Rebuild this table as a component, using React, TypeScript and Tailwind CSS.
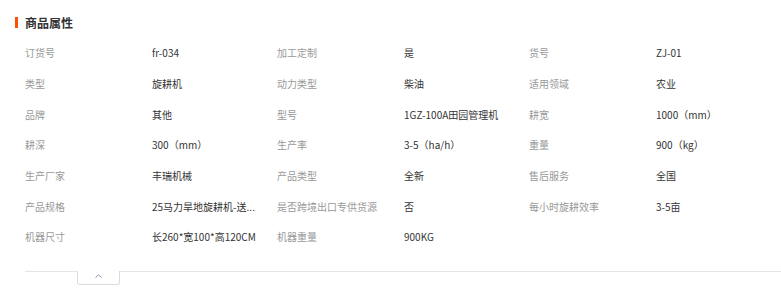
import React from 'react';

type Attr = [string, string];

const rows: Attr[][] = [
  [['订货号', 'fr-034'], ['加工定制', '是'], ['货号', 'ZJ-01']],
  [['类型', '旋耕机'], ['动力类型', '柴油'], ['适用领域', '农业']],
  [['品牌', '其他'], ['型号', '1GZ-100A田园管理机'], ['耕宽', '1000（mm）']],
  [['耕深', '300（mm）'], ['生产率', '3-5（ha/h）'], ['重量', '900（kg）']],
  [['生产厂家', '丰瑞机械'], ['产品类型', '全新'], ['售后服务', '全国']],
  [['产品规格', '25马力旱地旋耕机-送...'], ['是否跨境出口专供货源', '否'], ['每小时旋耕效率', '3-5亩']],
  [['机器尺寸', '长260*宽100*高120CM'], ['机器重量', '900KG']],
];

const AttrCell: React.FC<{ label: string; value: string }> = ({ label, value }) => (
  <div className="flex items-center w-[252px]">
    <span className="w-[127px] shrink-0 text-[#999999] whitespace-nowrap">{label}</span>
    <span className="text-[#333333] whitespace-nowrap">{value}</span>
  </div>
);

const App: React.FC = () => {
  return (
    <div
      className="w-[781px] h-[296px] bg-white pt-[14px] overflow-hidden"
      style={{ fontFamily: '"Noto Sans CJK SC", "Noto Sans", sans-serif' }}
    >
      <div className="flex items-center h-[17px] pl-[15px]">
        <span className="w-[3px] h-[11px] bg-[#ff5000]" />
        <h2 className="ml-[7px] text-[12px] font-bold text-[#333333] leading-[17px]">商品属性</h2>
      </div>

      <div className="ml-[25px] mt-[7px] text-[10px] leading-[14px]">
        {rows.map((row, i) => (
          <div key={i} className="flex items-center h-[30.67px]">
            {row.map(([label, value]) => (
              <AttrCell key={label} label={label} value={value} />
            ))}
          </div>
        ))}
      </div>

      <div className="ml-[25px] mt-[18px] border-t border-[#e4e4e4]">
        <div className="ml-[52px] w-[43px] h-[14px] -mt-px bg-white border-x border-b border-[#dcdcdc] rounded-b-[3px] flex items-center justify-center">
          <svg width="7" height="4" viewBox="0 0 7 4" className="mb-[2px]">
            <polyline points="0.5,3.5 3.5,0.8 6.5,3.5" fill="none" stroke="#8a9bb0" strokeWidth="1" />
          </svg>
        </div>
      </div>
    </div>
  );
};

export default App;
